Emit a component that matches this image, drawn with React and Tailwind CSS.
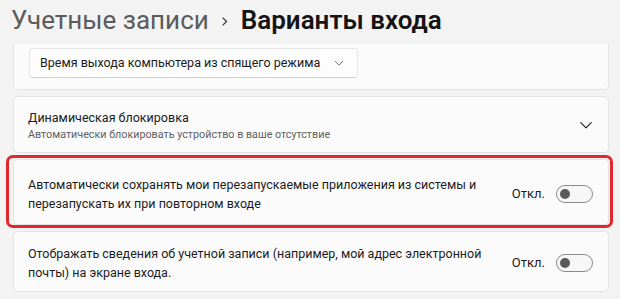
import React from "react";

const font = { fontFamily: '"Segoe UI", Roboto, "Noto Sans", sans-serif' };

function Toggle() {
  return (
    <div className="flex items-center gap-[11px]">
      <span className="text-[13px] text-[#1b1b1b]">Откл.</span>
      <div className="flex h-[18px] w-[37px] items-center rounded-full border border-[#8b8b8b] bg-[#f7f7f7] pl-[3px]">
        <div className="h-[10px] w-[10px] rounded-full bg-[#5a5a5a]" />
      </div>
    </div>
  );
}

function ChevronDown({ className }) {
  return (
    <svg viewBox="0 0 12 12" className={className} fill="none" stroke="currentColor" strokeWidth="1" strokeLinecap="round" strokeLinejoin="round">
      <path d="M1.5 4 L6 8.5 L10.5 4" />
    </svg>
  );
}

export default function App() {
  return (
    <div className="h-[299px] w-[620px] overflow-hidden whitespace-nowrap bg-[#f3f3f3] text-[#1b1b1b]" style={font}>
      <div className="flex h-[44px] items-center gap-[12px] pl-[11px] pb-[4px] text-[26px] leading-none">
        <span className="text-[#5b5b5b]">Учетные записи</span>
        <svg viewBox="0 0 10 14" className="mt-[2px] h-[11px] w-[8px] text-[#3a3a3a]" fill="none" stroke="currentColor" strokeWidth="1.6">
          <path d="M2 2 L7 7 L2 12" />
        </svg>
        <span className="font-semibold text-[#141414]">Варианты входа</span>
      </div>

      <div className="ml-[13px] mr-[11px] flex flex-col gap-[6px]">
        <div className="h-[46px] rounded-b-[5px] border-x border-b border-[#e3e3e3] bg-[#fbfbfb] pl-[15px] pt-[4px]">
          <div className="flex h-[30px] w-[329px] items-center justify-between rounded-[4px] border border-[#e5e5e5] border-b-[#d2d2d2] bg-[#fdfdfd] pl-[10px] pr-[13px] text-[12.5px]">
            <span>Время выхода компьютера из спящего режима</span>
            <ChevronDown className="h-[10px] w-[10px] text-[#555]" />
          </div>
        </div>

        <div className="flex h-[57px] items-center justify-between rounded-[5px] border border-[#e3e3e3] bg-[#fbfbfb] pl-[14px] pr-[15px]">
          <div className="flex flex-col pt-[2px]">
            <span className="text-[12.5px] leading-[18px]">Динамическая блокировка</span>
            <span className="text-[10.75px] leading-[15px] text-[#5f5f5f]">Автоматически блокировать устройство в ваше отсутствие</span>
          </div>
          <ChevronDown className="h-[14px] w-[14px] text-[#222]" />
        </div>

        <div className="relative">
          <div className="flex h-[66px] items-center justify-between rounded-[5px] border border-[#e3e3e3] bg-[#fbfbfb] pl-[14px] pr-[15px] pt-[3px] text-[12.5px] leading-[19px]">
            <span>
              Автоматически сохранять мои перезапускаемые приложения из системы и
              <br />
              перезапускать их при повторном входе
            </span>
            <Toggle />
          </div>
          <div className="absolute -top-[4px] -bottom-[3px] -left-[7px] -right-[4px] rounded-[7px] border-[3px] border-[#e2262d]" />
        </div>

        <div className="flex h-[61px] items-center justify-between rounded-[5px] border border-[#e3e3e3] bg-[#fbfbfb] pl-[14px] pr-[15px] pt-[2px] text-[12.5px] leading-[19px]">
          <span>
            Отображать сведения об учетной записи (например, мой адрес электронной
            <br />
            почты) на экране входа.
          </span>
          <Toggle />
        </div>
      </div>
    </div>
  );
}
